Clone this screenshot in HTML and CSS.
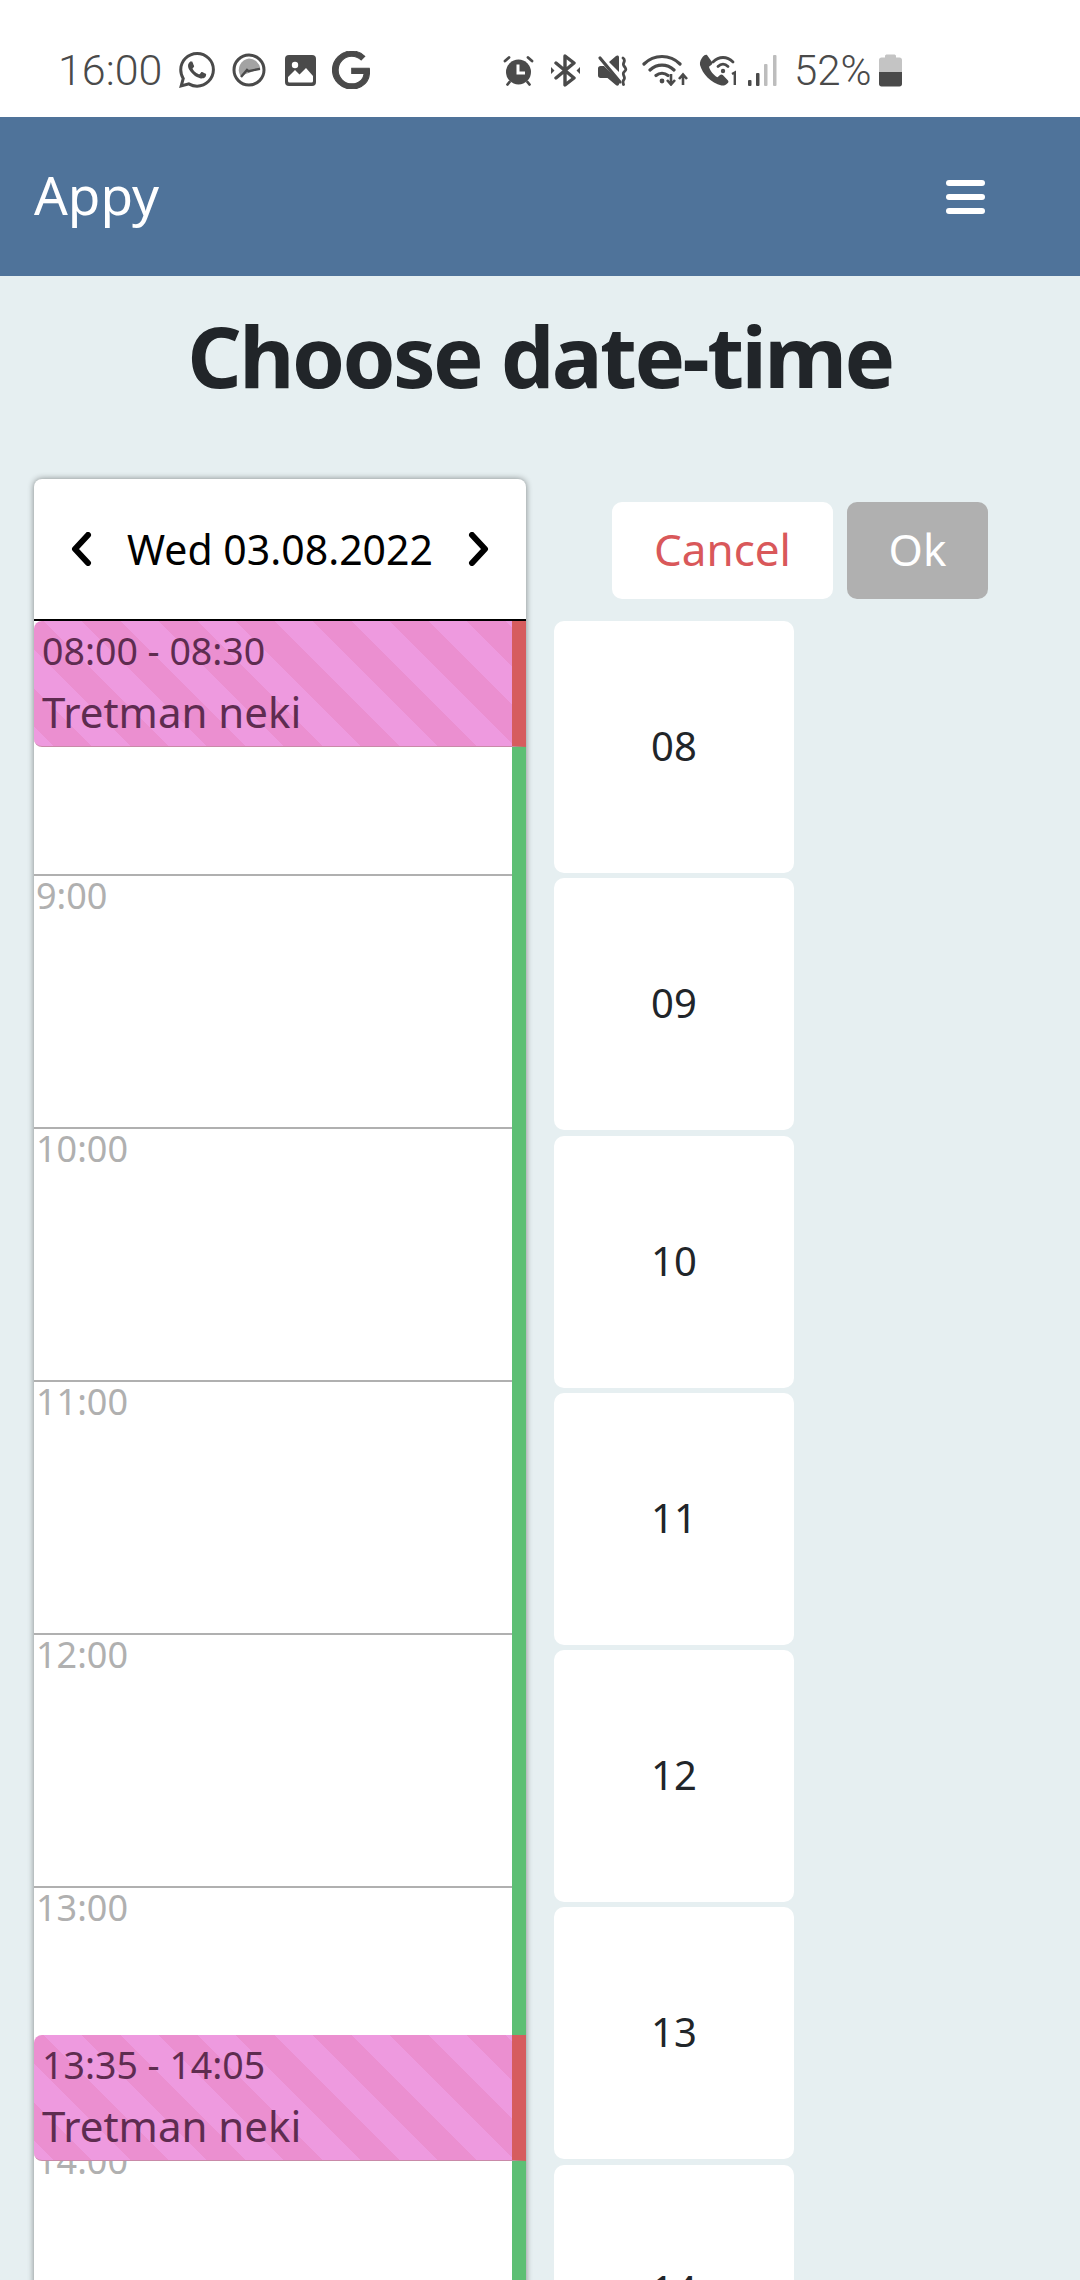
FILE: index.html
```html
<!DOCTYPE html>
<html lang="en">
<head>
  <meta charset="UTF-8">
  <meta name="viewport" content="width=device-width, initial-scale=1.0">
  <title>Appy - Choose date-time</title>
  <link rel="stylesheet" href="styles.css">
</head>
<body>
  <!-- Phone status bar -->
  <div class="status-bar">
    <div class="status-left">
      <span class="clock">16:00</span>
      <svg class="ic ic-whatsapp" viewBox="0 0 24 24"><path fill="#4a4a4a" d="M17.472 14.382c-.297-.149-1.758-.867-2.03-.967-.273-.099-.471-.148-.67.15-.197.297-.767.966-.94 1.164-.173.199-.347.223-.644.075-.297-.15-1.255-.463-2.39-1.475-.883-.788-1.48-1.761-1.653-2.059-.173-.297-.018-.458.13-.606.134-.133.298-.347.446-.52.149-.174.198-.298.298-.497.099-.198.05-.371-.025-.52-.075-.149-.669-1.612-.916-2.207-.242-.579-.487-.5-.669-.51-.173-.008-.371-.01-.57-.01-.198 0-.52.074-.792.372-.272.297-1.04 1.016-1.04 2.479 0 1.462 1.065 2.875 1.213 3.074.149.198 2.096 3.2 5.077 4.487.709.306 1.262.489 1.694.625.712.227 1.36.195 1.871.118.571-.085 1.758-.719 2.006-1.413.248-.694.248-1.289.173-1.413-.074-.124-.272-.198-.57-.347m-5.421 7.403h-.004a9.87 9.87 0 01-5.031-1.378l-.361-.214-3.741.982.998-3.648-.235-.374a9.86 9.86 0 01-1.51-5.26c.001-5.45 4.436-9.884 9.888-9.884 2.64 0 5.122 1.03 6.988 2.898a9.825 9.825 0 012.893 6.994c-.003 5.45-4.437 9.884-9.885 9.884m8.413-18.297A11.815 11.815 0 0012.05 0C5.495 0 .16 5.335.157 11.892c0 2.096.547 4.142 1.588 5.945L.057 24l6.305-1.654a11.882 11.882 0 005.683 1.448h.005c6.554 0 11.89-5.335 11.893-11.893a11.821 11.821 0 00-3.48-8.413z"/></svg>
      <svg class="ic ic-gauge" viewBox="0 0 34 34">
        <circle cx="17" cy="17" r="15" fill="#fff" stroke="#4a4a4a" stroke-width="3"/>
        <path fill="#a3a3a3" d="M17 5.500a11.500 11.500 0 0 1 11.300 10L8.500 23A11.500 11.500 0 0 1 17 5.500z"/>
        <path fill="none" stroke="#4a4a4a" stroke-width="2.400" d="M9 24l6-7 1.500 1.200L28 15.800"/>
      </svg>
      <svg class="ic ic-image" viewBox="0 0 31 31">
        <rect width="31" height="31" rx="4" fill="#4a4a4a"/>
        <circle cx="10" cy="10" r="3.200" fill="#fff"/>
        <path fill="#fff" d="M3 26v-4l7-7 4.500 4.500L21 13l7 8v5a1.500 1.500 0 0 1-1.500 1.500H4.500A1.500 1.500 0 0 1 3 26z"/>
      </svg>
      <svg class="ic ic-google" viewBox="0 0 24 24"><path fill="#4a4a4a" stroke="#4a4a4a" stroke-width=".7" d="M12.48 10.92v3.28h7.84c-.24 1.84-.853 3.187-1.787 4.133-1.147 1.147-2.933 2.4-6.053 2.4-4.827 0-8.6-3.893-8.6-8.72s3.773-8.72 8.6-8.72c2.6 0 4.507 1.027 5.907 2.347l2.307-2.307C18.747 1.44 16.133 0 12.48 0 5.867 0 .307 5.387.307 12s5.56 12 12.173 12c3.573 0 6.267-1.173 8.373-3.36 2.16-2.16 2.84-5.213 2.84-7.667 0-.76-.053-1.467-.173-2.053H12.48z"/></svg>
    </div>
    <div class="status-right">
      <svg class="ic ic-alarm" viewBox="0 0 31 31">
        <circle cx="15.500" cy="17" r="12.500" fill="#4a4a4a"/>
        <path fill="none" stroke="#4a4a4a" stroke-width="2.800" stroke-linecap="round" d="M2 6l4-3.500M29 6l-4-3.500M6.500 27l-2 2.500M24.500 27l2 2.500"/>
        <path fill="none" stroke="#fff" stroke-width="3" d="M15 9.500v8.500h7"/>
      </svg>
      <svg class="ic ic-bluetooth" viewBox="0 0 29 33">
        <path fill="none" stroke="#4a4a4a" stroke-width="3.400" stroke-linejoin="round" stroke-linecap="round" d="M5 9l18 15-9 7V2l9 7L5 24"/>
        <path fill="#4a4a4a" d="M0 13l3.500 3.500L0 20zM29 13l-3.500 3.500L29 20z"/>
      </svg>
      <svg class="ic ic-mute" viewBox="0 0 32 31">
        <path fill="#4a4a4a" d="M1 13.500c0-1.500 1-2.500 2.500-2.500H7l15 15v3c0 1.800-2 2.300-3.200 1L10.500 23H3.500C2 23 1 22 1 20.500zM12 7l7-6c1.300-1 3-.5 3 1.200V17z"/>
        <path fill="none" stroke="#4a4a4a" stroke-width="3.200" stroke-linecap="round" d="M3 3l20 24"/>
        <path fill="none" stroke="#4a4a4a" stroke-width="2.800" stroke-linecap="round" d="M26 3c4 3-1.500 5 1 8s2.500 3.500 0 6 2 5 0 7.500c-1 1-1.500 2-.5 5"/>
      </svg>
      <svg class="ic ic-wifi" viewBox="0 0 46 32">
        <path fill="none" stroke="#4a4a4a" stroke-width="3.200" stroke-linecap="round" d="M2 10c10-10 26-10 36 0M8 16c7-6.500 17-6.500 24 0M14 21.500c3.500-3 8.500-3 12 0"/>
        <circle cx="20" cy="27" r="2.400" fill="#4a4a4a"/>
        <path fill="none" stroke="#4a4a4a" stroke-width="2.600" d="M29 20v10M25 26l4 4.500 4-4.500M41 31V21M37 25l4-4.500 4 4.500"/>
      </svg>
      <svg class="ic ic-call" viewBox="0 0 38 32">
        <path fill="#4a4a4a" d="M8 1l5 7c.6 1 .3 2-.5 2.800l-2.500 2c1 4 4.500 8.500 8.500 10.500l2.500-2.300c.8-.8 2-.8 2.800 0l5.200 5.500c.8 1 .4 2-.5 2.800-1.700 1.500-3.500 2.700-6 2.200C12 29 3.500 20 1 11 .5 8 2 5 4 2.500 5 1.200 7 0 8 1z"/>
        <path fill="none" stroke="#4a4a4a" stroke-width="2.800" stroke-linecap="round" d="M14 8c6-6 14-6 20 0M19 12.500c3-3 7-3 10 0"/>
        <circle cx="24" cy="17" r="2.200" fill="#4a4a4a"/>
        <path fill="none" stroke="#4a4a4a" stroke-width="2.400" d="M33 20l2.800-1.500V31"/>
      </svg>
      <svg class="ic ic-signal" viewBox="0 0 30 32">
        <rect x="1" y="26" width="3.500" height="6" rx="1" fill="#4a4a4a"/>
        <rect x="9" y="19" width="3.500" height="13" rx="1" fill="#4a4a4a"/>
        <rect x="17" y="10" width="3.500" height="22" rx="1" fill="#bdbdbd"/>
        <rect x="26" y="1" width="3.500" height="31" rx="1" fill="#bdbdbd"/>
      </svg>
      <span class="battery-text">52%</span>
      <svg class="ic ic-battery" viewBox="0 0 23 34">
        <path fill="#c4c4c4" d="M6 3c0-1 1-1.500 2-1.500h7c1 0 2 .5 2 1.500v1.500h3.500c1.500 0 2.500 1 2.500 2.500V19H0V7c0-1.500 1-2.500 2.500-2.500H6z"/>
        <path fill="#4a4a4a" d="M0 19h23v12c0 1.500-1 2.500-2.500 2.500h-18C1 33.500 0 32.500 0 31z"/>
      </svg>
    </div>
  </div>

  <div class="navbar">
    <div class="brand">Appy</div>
    <div class="burger"><span></span><span></span><span></span></div>
  </div>

  <h1 class="page-title">Choose date-time</h1>

  <div class="picker">
    <div class="day-card">
      <div class="day-head">
        <svg class="chevron" viewBox="0 0 21 34"><path d="M17 3L4 17l13 14"/></svg>
        <span class="day-label">Wed 03.08.2022</span>
        <svg class="chevron" viewBox="0 0 21 34"><path d="M4 3l13 14L4 31"/></svg>
      </div>
      <div class="timeline">
        <div class="hour hour-first"></div>
        <div class="hour"><span>9:00</span></div>
        <div class="hour"><span>10:00</span></div>
        <div class="hour"><span>11:00</span></div>
        <div class="hour"><span>12:00</span></div>
        <div class="hour"><span>13:00</span></div>
        <div class="hour"><span>14:00</span></div>

        <div class="event event-morning">
          <div class="event-time">08:00 - 08:30</div>
          <div class="event-name">Tretman neki</div>
        </div>
        <div class="event event-afternoon">
          <div class="event-time">13:35 - 14:05</div>
          <div class="event-name">Tretman neki</div>
        </div>
      </div>
    </div>

    <div class="side">
      <div class="actions">
        <button class="btn btn-cancel">Cancel</button>
        <button class="btn btn-ok">Ok</button>
      </div>
      <div class="hour-list">
        <div class="hour-btn">08</div>
        <div class="hour-btn">09</div>
        <div class="hour-btn">10</div>
        <div class="hour-btn">11</div>
        <div class="hour-btn">12</div>
        <div class="hour-btn">13</div>
        <div class="hour-btn">14</div>
      </div>
    </div>
  </div>
</body>
</html>
```

FILE: styles.css
```css
html, body {
  margin: 0;
  height: 2280px;
  overflow: hidden;
}
body {
  font-family: "Noto Sans", sans-serif;
  background-color: #e6eff1;
  color: #212529;
}

/* status bar */
.status-bar {
  height: 117px;
  box-sizing: border-box;
  padding: 36px 0 0 58px;
  background-color: #fff;
  display: flex;
  align-items: flex-start;
  color: #4a4a4a;
  font-family: Roboto, sans-serif;
}
.status-left {
  display: flex;
  align-items: center;
  height: 68px;
  width: 385px;
  flex: none;
}
.status-right {
  display: flex;
  align-items: center;
  height: 68px;
}
.clock {
  font-size: 43px;
  font-weight: 300;
  width: 121px;
}
.battery-text {
  font-size: 42px;
  font-weight: 300;
  margin-left: 17px;
}
.ic { display: block; flex: none; }
.ic-whatsapp { width: 36px; height: 36px; }
.ic-gauge { width: 34px; height: 34px; margin-left: 17px; }
.ic-image { width: 31px; height: 31px; margin-left: 19px; }
.ic-google { width: 38px; height: 38px; margin-left: 16px; }
.ic-alarm { width: 31px; height: 31px; margin-left: 60px; }
.ic-bluetooth { width: 29px; height: 33px; margin-left: 17px; }
.ic-mute { width: 32px; height: 31px; margin-left: 17px; }
.ic-wifi { width: 46px; height: 32px; margin-left: 13px; }
.ic-call { width: 38px; height: 32px; margin-left: 11px; }
.ic-signal { width: 30px; height: 32px; margin-left: 10px; }
.ic-battery { width: 23px; height: 34px; margin-left: 7px; }

/* nav */
.navbar {
  height: 159px;
  background-color: #4f739a;
  display: flex;
  align-items: center;
  justify-content: space-between;
  padding: 0 95px 0 34px;
}
.brand {
  color: #fff;
  font-size: 53px;
  padding-bottom: 5px;
}
.burger {
  display: flex;
  flex-direction: column;
  gap: 8px;
  width: 39px;
}
.burger span {
  height: 6px;
  border-radius: 3px;
  background-color: #fff;
}

.page-title {
  margin: 0;
  height: 203px;
  padding-top: 23px;
  box-sizing: border-box;
  text-align: center;
  font-size: 85px;
  letter-spacing: -2.600px;
  line-height: 112px;
  font-weight: 700;
}

/* main */
.picker {
  display: flex;
  align-items: flex-start;
  padding-left: 34px;
}
.day-card {
  width: 492px;
  flex: none;
  background-color: #fff;
  border-radius: 8px 8px 0 0;
  box-shadow: 0 0 6px rgba(0, 0, 0, 0.45);
}
.day-head {
  height: 140px;
  border-bottom: 2px solid #000;
  display: flex;
  align-items: center;
  justify-content: space-between;
  padding: 0 37px;
  color: #000;
}
.day-label { font-size: 41px; }
.chevron { width: 21px; height: 34px; flex: none; }
.chevron path {
  fill: none;
  stroke: #000;
  stroke-width: 6;
  stroke-linecap: round;
  stroke-linejoin: round;
}

.timeline {
  position: relative;
  border-right: 14px solid #5dbf74;
}
.hour {
  height: 251px;
  border-top: 2px solid #b0b0b0;
  color: #b0b0b0;
  font-size: 36px;
  line-height: 40px;
  padding-left: 2px;
}
.hour-first {
  height: 253px;
  border-top: 0;
}

.event {
  position: absolute;
  left: 0;
  right: -14px;
  height: 126px;
  box-sizing: border-box;
  padding: 4px 0 0 8px;
  border-right: 14px solid #d65c5e;
  border-bottom: 1px solid #c98aa8;
  border-radius: 8px 0 0 8px;
  color: #5e2c50;
  background: repeating-linear-gradient(45deg, #ee9adf 0, #ee9adf 13.500px, #eb8fd0 13.500px, #eb8fd0 40.700px, #ee9adf 40.700px, #ee9adf 54.400px);
}
.event-morning { top: 0; }
.event-afternoon { top: 1414px; }
.event-time {
  font-size: 37.500px;
  line-height: 52px;
}
.event-name {
  font-size: 42px;
  line-height: 70px;
}

/* right column */
.side {
  margin-left: 28px;
  width: 434px;
  flex: none;
}
.actions {
  display: flex;
  gap: 14px;
  padding: 23px 0 0 58px;
  height: 119px;
}
.btn {
  height: 97px;
  border: 0;
  border-radius: 10px;
  font-family: inherit;
  font-size: 44px;
  line-height: 90px;
  padding: 0 0 3px;
}
.btn-cancel {
  width: 221px;
  background-color: #fff;
  color: #d9585a;
}
.btn-ok {
  width: 141px;
  background-color: #b0b0b0;
  color: #fff;
}
.hour-list {
  display: flex;
  flex-direction: column;
  gap: 5.300px;
  width: 240px;
}
.hour-btn {
  height: 252px;
  flex: none;
  background-color: #fff;
  border-radius: 10px;
  display: flex;
  align-items: center;
  justify-content: center;
  padding-bottom: 3px;
  box-sizing: border-box;
  font-size: 40px;
}
```
